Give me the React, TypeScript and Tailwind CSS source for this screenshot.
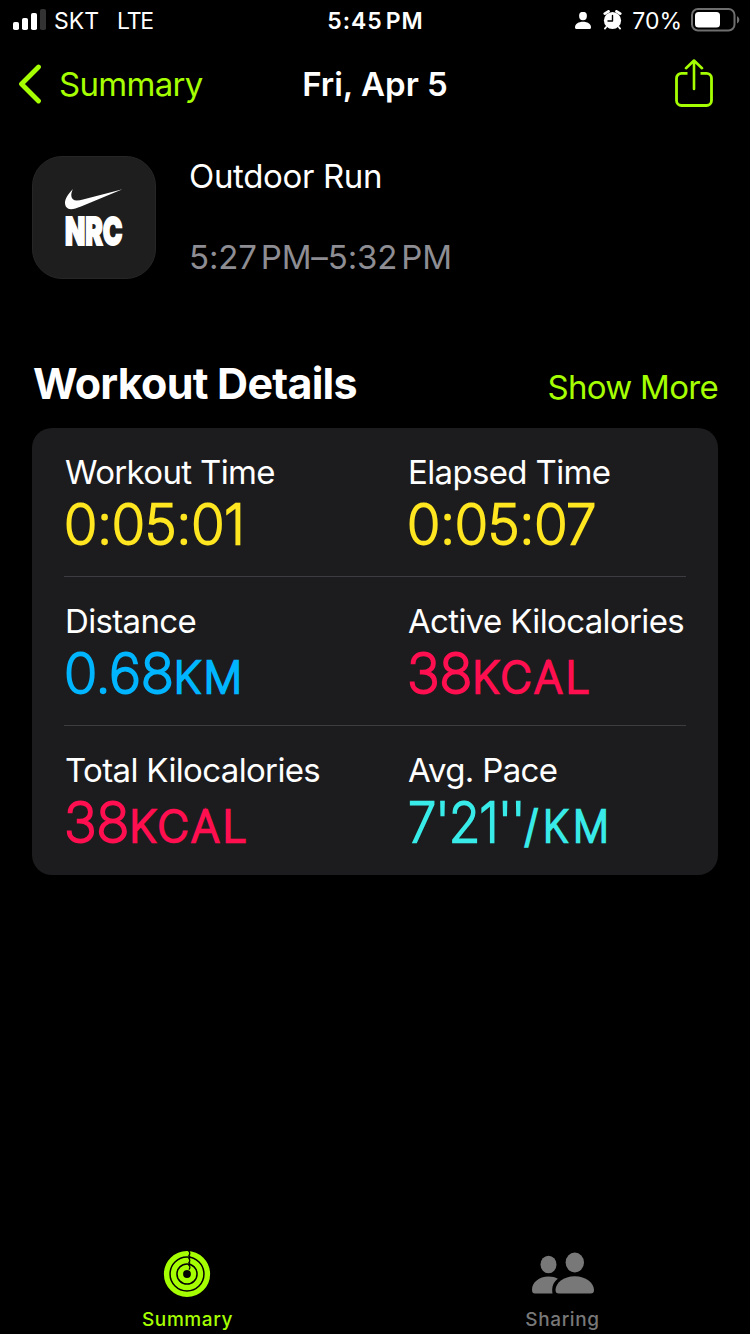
import clsx from 'clsx'

interface Metric {
  label: string
  value: string
  unit?: string
  color: string
  condensed?: boolean
}

const metricRows: Metric[][] = [
  [
    { label: 'Workout Time', value: '0:05:01', color: 'text-[#ffe620]' },
    { label: 'Elapsed Time', value: '0:05:07', color: 'text-[#ffe620]' }
  ],
  [
    { label: 'Distance', value: '0.68', unit: 'KM', color: 'text-[#00b5ff]' },
    { label: 'Active Kilocalories', value: '38', unit: 'KCAL', color: 'text-[#ff0f50]' }
  ],
  [
    { label: 'Total Kilocalories', value: '38', unit: 'KCAL', color: 'text-[#ff0f50]' },
    { label: 'Avg. Pace', value: `7'21''`, unit: '/KM', color: 'text-[#38ebe8]', condensed: true }
  ]
]

function SignalIcon() {
  return (
    <svg width="33" height="22" viewBox="0 0 33 22" fill="white">
      <rect x="0" y="13" width="6" height="8" rx="1.8" />
      <rect x="9" y="9" width="6" height="12" rx="1.8" />
      <rect x="18" y="4" width="6" height="17" rx="1.8" />
      <rect x="27" y="0" width="6" height="21" rx="1.8" fill="#333333" />
    </svg>
  )
}

function PersonIcon() {
  return (
    <svg width="16" height="17" viewBox="0 0 16 17" fill="white">
      <ellipse cx="8" cy="4" rx="3.9" ry="4.2" />
      <path d="M0 15.2C0 12 3.6 9.8 8 9.8s8 2.2 8 5.4c0 1.2-.5 1.8-1.6 1.8H1.6C.5 17 0 16.4 0 15.2z" />
    </svg>
  )
}

function AlarmIcon() {
  return (
    <svg width="20" height="20" viewBox="0 0 20 20" fill="none">
      <circle cx="9.5" cy="10.5" r="8.6" fill="white" />
      <path d="M1.8 3.6 5.5 1.4M13.5 1.4 17.2 3.6" stroke="white" strokeWidth="2.8" strokeLinecap="round" />
      <path d="M3.2 17 1.9 18.6M15.8 17 17.1 18.6" stroke="white" strokeWidth="1.8" strokeLinecap="round" />
      <path d="M9.5 5.5V11H5" stroke="black" strokeWidth="1.4" strokeLinecap="round" strokeLinejoin="round" />
    </svg>
  )
}

function BatteryIcon() {
  return (
    <svg width="49" height="24" viewBox="0 0 49 24" fill="none">
      <rect x="1" y="1" width="42.5" height="21.5" rx="6" stroke="#6e6e6e" strokeWidth="2" />
      <rect x="4" y="4" width="25" height="15.5" rx="3.5" fill="white" />
      <path d="M46 8.2c1.5.6 2.3 2 2.3 3.6s-.8 3-2.3 3.6z" fill="#6e6e6e" />
    </svg>
  )
}

function ShareIcon() {
  return (
    <svg width="40" height="50" viewBox="0 0 40 50" fill="none" stroke="#a6ff00" strokeWidth="2.8" strokeLinecap="round" strokeLinejoin="round">
      <path d="M13.5 14.4H7.5a5 5 0 0 0-5 5V41.5a5 5 0 0 0 5 5h25a5 5 0 0 0 5-5V19.4a5 5 0 0 0-5-5h-6" strokeLinecap="butt" />
      <path d="M20 30V2M12 9.2 20 1.5 28 9.2" strokeWidth="2.6" />
    </svg>
  )
}

function RunClubLogo() {
  return (
    <div className="flex h-[123px] w-[124px] shrink-0 items-center justify-center rounded-[30px] border border-[#262626] bg-[#1e1e1e]">
      <svg width="60" height="60" viewBox="0 0 60 60" fill="white" className="overflow-visible">
        <path d="M58.5 1.2 17 18.6C13 20.3 9.5 21.2 7 21.2 3 21.2 1 18.5 1 14.8 1 10.5 4.5 5.5 9 1 6.5 5.5 6 12.3 12.8 12.5c2 0 4-.4 6.2-1z" />
        <text x="1" y="57.2" fontSize="38.5" textLength="57.5" lengthAdjust="spacingAndGlyphs" className="font-['Inter'] font-black" stroke="white" strokeWidth="1.8">
          NRC
        </text>
      </svg>
    </div>
  )
}

function RingsIcon() {
  return (
    <svg width="48" height="48" viewBox="0 0 48 48" fill="none" stroke="#a6ff00">
      <circle cx="24" cy="24" r="20.4" strokeWidth="5.4" />
      <circle cx="24" cy="24" r="13.5" strokeWidth="5.4" />
      <circle cx="24" cy="24" r="6.6" strokeWidth="5.4" />
      {/* gaps where each ring starts */}
      <path d="M25.5.8q2.6 2.5 0 5.4M25.5 8q2.6 2.5 0 5.2M25.5 15q2.6 2 .4 4.6" stroke="black" strokeWidth="1.3" />
      <path d="M26.6 5.8v3M26.6 12.6v3" stroke="black" strokeWidth="1.3" />
    </svg>
  )
}

function PeopleIcon() {
  return (
    <svg width="64" height="44" viewBox="0 0 64 44" fill="#787878">
      <ellipse cx="17.5" cy="13.5" rx="8" ry="8.8" />
      <path d="M1 38.5C1 31.5 8 25.5 17.5 25.5c3.7 0 6.8.8 9.4 2.3C22.5 31 20.500 35.500 21.500 42.500H4C2 42.500 1 41.500 1 38.500z" />
      <ellipse cx="43.8" cy="11.5" rx="9.2" ry="10" />
      <path d="M24.5 39c0-7 8-13.8 19.2-13.8S63 32 63 39c0 2.5-1 3.5-3.5 3.5H28c-2.5 0-3.5-1-3.5-3.5z" />
    </svg>
  )
}

function StatusBar() {
  return (
    <div className="grid h-10 grid-cols-[1fr_auto_1fr] items-center px-[10px] text-[23px] text-white">
      <div className="flex items-center pl-[3px]">
        <SignalIcon />
        <span className="ml-2 pt-0.5">SKT</span>
        <span className="ml-[18px] pt-0.5 tracking-[-1.2px]">LTE</span>
      </div>
      <div className="pt-0.5 pl-px text-center font-semibold tracking-[1px]">
        5:45<span className="ml-[3px]">PM</span>
      </div>
      <div className="flex items-center justify-end">
        <PersonIcon />
        <span className="ml-3">
          <AlarmIcon />
        </span>
        <span className="ml-[9px] pt-0.5">70%</span>
        <span className="ml-[9px]">
          <BatteryIcon />
        </span>
      </div>
    </div>
  )
}

function MetricCell({ metric }: { metric: Metric }) {
  return (
    <div className="whitespace-nowrap">
      <div className="pl-px text-[33px] leading-10 tracking-[-0.65px] text-white">{metric.label}</div>
      <div
        className={clsx(
          'mt-1 text-[55px] leading-[56px] font-extralight [-webkit-text-stroke:2.3px_currentColor]',
          metric.color,
          metric.condensed ? 'origin-left scale-x-[0.93] pl-px tracking-[-1.1px]' : 'tracking-[-0.3px]'
        )}
      >
        {metric.value}
        {metric.unit && (
          <span
            className={clsx(
              'text-[43px] leading-none [-webkit-text-stroke:2.700px_currentColor]',
              metric.condensed ? 'tracking-[5.5px]' : 'tracking-[3px]'
            )}
          >
            {metric.unit}
          </span>
        )}
      </div>
    </div>
  )
}

export default function App() {
  return (
    <div className="flex h-[1334px] w-[750px] flex-col overflow-hidden bg-black font-['Inter','Liberation_Sans',sans-serif]">
      <StatusBar />

      <header className="grid h-[88px] grid-cols-[1fr_auto_1fr] items-center px-[18px]">
        <button className="flex items-center text-left text-[33px] tracking-[-0.7px] text-[#a6ff00]">
          <svg width="24" height="40" viewBox="0 0 24 40" fill="none" stroke="#a6ff00" strokeWidth="4.8" strokeLinecap="round" strokeLinejoin="round">
            <path d="M20.5 3 3.5 20l17 17" />
          </svg>
          <span className="ml-[17px] pt-0.5">Summary</span>
        </button>
        <h1 className="pt-0.5 text-center text-[33px] font-semibold text-white">Fri, Apr 5</h1>
        <button className="mr-[18px] justify-self-end">
          <ShareIcon />
        </button>
      </header>

      <main className="flex-1 px-8 pt-7">
        <section className="flex gap-[33px]">
          <RunClubLogo />
          <div className="text-[33px] leading-10">
            <div className="tracking-[-0.35px] text-white">Outdoor Run</div>
            <div className="mt-[41px] tracking-[-0.15px] text-[#8d8d93]">
              5:27<span className="ml-1">PM–5:32</span>
              <span className="ml-1">PM</span>
            </div>
          </div>
        </section>

        <div className="mt-[77px] flex items-baseline justify-between">
          <h2 className="pl-px text-[43px] leading-[54px] font-bold tracking-[-0.75px] text-white">Workout Details</h2>
          <button className="text-[33px] tracking-[-0.7px] text-[#a6ff00]">Show More</button>
        </div>

        <section className="mt-[15px] rounded-[20px] bg-[#1c1c1e] px-8 pb-px">
          {metricRows.map((row, i) => (
            <div key={i} className={clsx('grid grid-cols-[343px_1fr] py-6', i > 0 && 'border-t border-[#3d3d41]')}>
              {row.map((metric) => (
                <MetricCell key={metric.label} metric={metric} />
              ))}
            </div>
          ))}
        </section>
      </main>

      <nav className="grid h-[88px] grid-cols-2 text-[19px] font-medium tracking-[0.6px]">
        <button className="flex flex-col items-center pt-1 text-[#a6ff00]">
          <span className="pr-px">
            <RingsIcon />
          </span>
          <span className="mt-2 leading-7">Summary</span>
        </button>
        <button className="flex flex-col items-center pt-[5px] text-[#787878]">
          <PeopleIcon />
          <span className="mt-[11px] leading-7">Sharing</span>
        </button>
      </nav>
    </div>
  )
}
